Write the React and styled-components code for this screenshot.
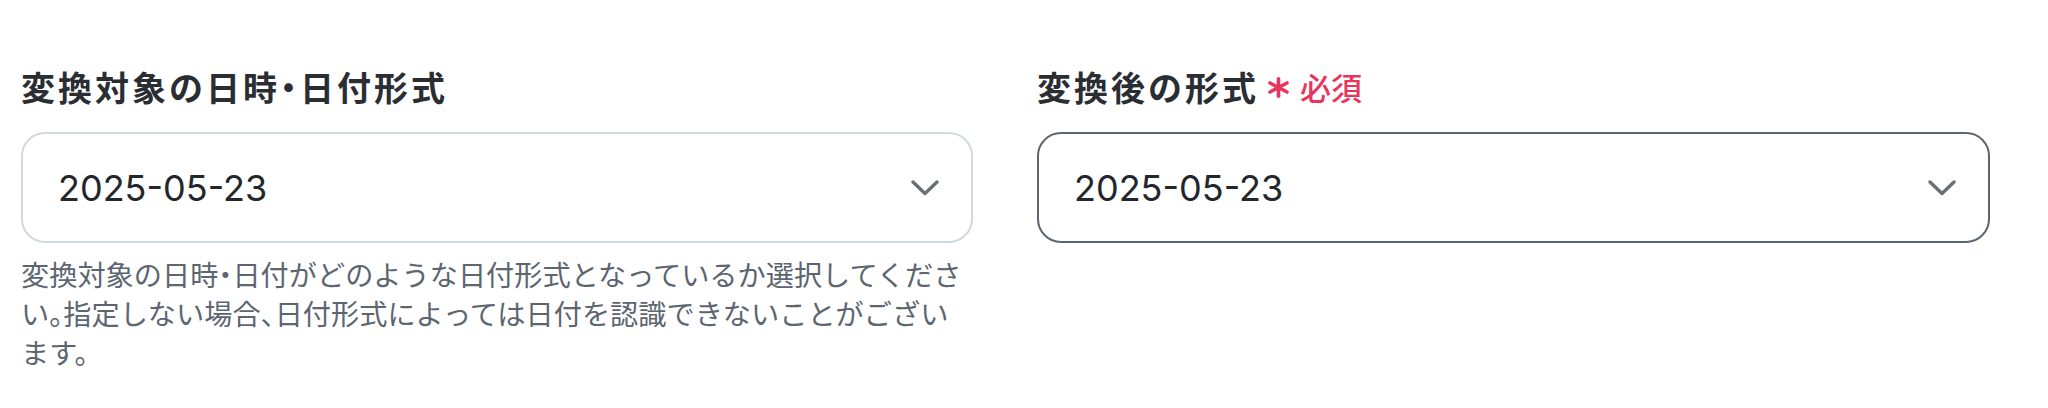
import React from "react";
import styled, { createGlobalStyle } from "styled-components";

const GlobalStyle = createGlobalStyle`
  body {
    margin: 0;
    background: #ffffff;
    font-family: "Noto Sans CJK JP", "Noto Sans", sans-serif;
  }
`;

const Page = styled.div`
  display: grid;
  grid-template-columns: 952px 953px;
  column-gap: 64px;
  align-items: start;
  padding: 63px 0 0 21px;
`;

const Field = styled.div`
  display: flex;
  flex-direction: column;
`;

const LabelRow = styled.div`
  display: flex;
  align-items: center;
  height: 48px;
  margin-bottom: 21px;
`;

const Label = styled.span`
  font-family: "Noto Sans CJK JP", sans-serif;
  font-size: 34px;
  font-weight: 700;
  letter-spacing: 3px;
  font-feature-settings: "halt";
  color: #2a2e33;
  line-height: 48px;
`;

const Required = styled.span`
  display: flex;
  align-items: center;
  gap: 10px;
  margin-left: 8px;
  color: #e9345c;
  font-family: "Noto Sans CJK JP", sans-serif;
  font-size: 31px;
  font-weight: 500;
  line-height: 48px;
`;

const Select = styled.div`
  box-sizing: border-box;
  height: 111px;
  display: flex;
  align-items: center;
  justify-content: space-between;
  padding: 0 32px 0 35px;
  border: 2px solid ${(p) => (p.$active ? "#5c6570" : "#d1d9e0")};
  border-radius: 24px;
  background: #ffffff;
`;

const Value = styled.span`
  font-family: Inter, "Liberation Sans", sans-serif;
  font-size: 36px;
  font-weight: 400;
  color: #23272b;
`;

const Help = styled.p`
  margin: 11px 0 0;
  font-family: "Noto Sans CJK JP", sans-serif;
  font-size: 28.2px;
  line-height: 39px;
  font-feature-settings: "halt";
  color: #5c6570;
`;

const Chevron = () => (
  <svg width="28" height="16" viewBox="0 0 28 16" fill="none">
    <polyline
      points="2,2 14,13.5 26,2"
      stroke="#6b6f74"
      strokeWidth="3.4"
      strokeLinecap="round"
      strokeLinejoin="round"
    />
  </svg>
);

const Asterisk = () => (
  <svg width="23" height="21" viewBox="0 0 23 21" fill="none">
    <g stroke="#e9345c" strokeWidth="3.6" strokeLinecap="round">
      <line x1="11.5" y1="1.8" x2="11.5" y2="19.2" />
      <line x1="3" y1="6" x2="20" y2="15" />
      <line x1="3" y1="15" x2="20" y2="6" />
    </g>
  </svg>
);

export default function App() {
  return (
    <>
      <GlobalStyle />
      <Page>
        <Field>
          <LabelRow>
            <Label>変換対象の日時・日付形式</Label>
          </LabelRow>
          <Select>
            <Value>2025-05-23</Value>
            <Chevron />
          </Select>
          <Help>
            変換対象の日時・日付がどのような日付形式となっているか選択してください。指定しない場合、日付形式によっては日付を認識できないことがございます。
          </Help>
        </Field>
        <Field>
          <LabelRow>
            <Label>変換後の形式</Label>
            <Required>
              <Asterisk />
              必須
            </Required>
          </LabelRow>
          <Select $active>
            <Value>2025-05-23</Value>
            <Chevron />
          </Select>
        </Field>
      </Page>
    </>
  );
}
